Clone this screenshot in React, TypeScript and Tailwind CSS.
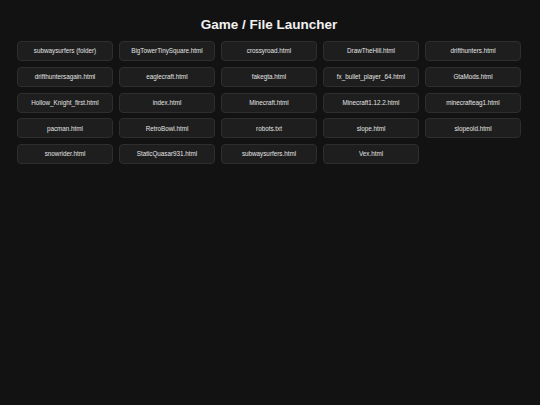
import React from 'react';

const files = [
  'subwaysurfers (folder)',
  'BigTowerTinySquare.html',
  'crossyroad.html',
  'DrawTheHill.html',
  'drifthunters.html',
  'drifthuntersagain.html',
  'eaglecraft.html',
  'fakegta.html',
  'fx_bullet_player_64.html',
  'GtaMods.html',
  'Hollow_Knight_first.html',
  'index.html',
  'Minecraft.html',
  'Minecraft1.12.2.html',
  'minecrafteag1.html',
  'pacman.html',
  'RetroBowl.html',
  'robots.txt',
  'slope.html',
  'slopeold.html',
  'snowrider.html',
  'StaticQuasar931.html',
  'subwaysurfers.html',
  'Vex.html',
];

export default function App() {
  return (
    <div className="min-h-screen bg-[#121212] text-white font-['Liberation_Sans',Arial,sans-serif]">
      <div className="w-[504px] ml-[17px] pt-[16px]">
        <h1 className="text-center text-[13.5px] leading-[18px] font-bold text-[#f2f2f2] mb-[7px]">
          Game / File Launcher
        </h1>
        <div className="grid grid-cols-5 gap-x-[6px] gap-y-[5.75px]">
          {files.map((f) => (
            <button
              key={f}
              className="h-[20px] rounded-[4px] bg-[#1e1e1e] border border-[#2e2e2e] text-[6.3px] text-[#e4e4e4] flex items-center justify-center whitespace-nowrap overflow-hidden"
            >
              {f}
            </button>
          ))}
        </div>
      </div>
    </div>
  );
}
